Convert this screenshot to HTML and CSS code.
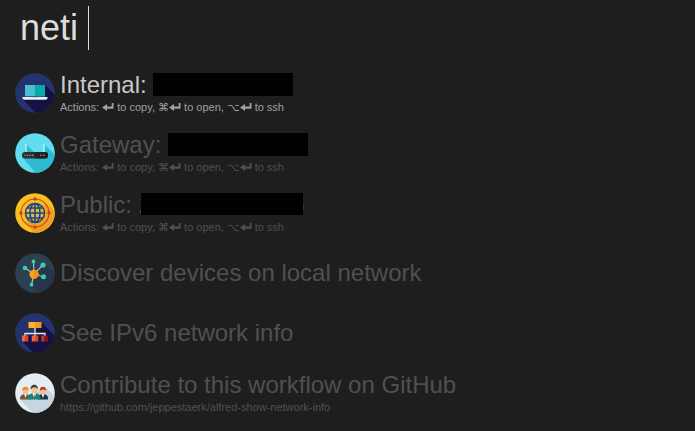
FILE: index.html
```html
<!DOCTYPE html>
<html lang="en">
<head>
<meta charset="utf-8">
<title>neti</title>
<link rel="stylesheet" href="styles.css">
</head>
<body>
<svg class="defs" aria-hidden="true">
  <symbol id="return" viewBox="0 0 12 9"><path d="M0 5.500 5 2v2.500h4.700V1h1.800v5.800H5V9z" fill="currentColor"/></symbol>
</svg>
<main class="launcher">
  <div class="search">
    <input class="query" type="text" value="neti " aria-label="Search" spellcheck="false"><span class="caret"></span>
  </div>
  <ul class="results">
    <li class="result selected">
      <svg class="icon" viewBox="0 0 40 40" aria-hidden="true">
        <clipPath id="disc"><circle cx="20" cy="20" r="19.8"/></clipPath>
        <g clip-path="url(#disc)">
          <path d="M0 0h40v40H0z" fill="#24336d"/>
          <path d="M30 12 44 26v18H24L8 26z" fill="#151243"/>
          <path d="M10 12h10v12H10z" fill="#4abfd1"/>
          <path d="M20 12h10v12H20z" fill="#08a8ad"/>
          <path d="M10 23.500h20" stroke="#196f82"/>
          <path d="M7.500 24h25v1.500l-1.500 1.300H9l-1.500-1.300z" fill="#e9eff3"/>
          <path d="M17 24h6v.8h-6z" fill="#b6c9d3"/>
        </g>
      </svg>
      <div class="text">
        <div class="title">Internal: <span class="redacted"></span></div>
        <div class="subtitle">Actions: <svg class="key"><use href="#return"/></svg> to copy, <span class="mod">⌘</span><svg class="key"><use href="#return"/></svg> to open, <span class="mod">⌥</span><svg class="key"><use href="#return"/></svg> to ssh</div>
      </div>
    </li>
    <li class="result">
      <svg class="icon" viewBox="0 0 40 40" aria-hidden="true">
        <g clip-path="url(#disc)">
          <path d="M0 0h40v40H0z" fill="#62dcef"/>
          <path d="M11 11 19 19h10v-8l15 15v18H24L8 25z" fill="#2dbbd2"/>
          <path d="M11 11v9M29 11v9" stroke="#b9edf5" stroke-width="1.6"/>
          <rect x="7" y="19" width="26" height="6.600" rx="3" fill="#293036"/>
          <path d="M20 19h10a3 3 0 0 1 3 3.300 3 3 0 0 1-3 3.300H20z" fill="#1f2328"/>
          <path d="M9.500 22.300h1.200m1.300 0h1.200m1.300 0h1.200m1.300 0h1.200" stroke="#a6a96b" stroke-width="1.200"/>
          <path d="M25 22.300h1.500m1.500 0h1.500" stroke="#c48235" stroke-width="1.200"/>
        </g>
      </svg>
      <div class="text">
        <div class="title">Gateway: <span class="redacted"></span></div>
        <div class="subtitle">Actions: <svg class="key"><use href="#return"/></svg> to copy, <span class="mod">⌘</span><svg class="key"><use href="#return"/></svg> to open, <span class="mod">⌥</span><svg class="key"><use href="#return"/></svg> to ssh</div>
      </div>
    </li>
    <li class="result">
      <svg class="icon" viewBox="0 0 40 40" aria-hidden="true">
        <g clip-path="url(#disc)">
          <path d="M0 0h40v40H0z" fill="#fbbf20"/>
          <path d="M31 10 44 23v21H24L10 30z" fill="#f0a01d"/>
          <circle cx="20" cy="20" r="14" fill="none" stroke="#c64a27" stroke-width="1.1"/>
          <circle cx="20" cy="20" r="11" fill="#f3ae38"/>
          <circle cx="20" cy="20" r="9.600" fill="#e9b250"/>
          <g fill="none" stroke="#174877" stroke-width="1.6">
            <circle cx="20" cy="20" r="9.500"/>
            <ellipse cx="20" cy="20" rx="5" ry="9.500"/>
            <path d="M20 10.500v19M10.500 20h19M12.500 15h15M12.500 25h15"/>
          </g>
          <g fill="#c64127"><circle cx="20" cy="6" r="1.700"/><circle cx="20" cy="34" r="1.700"/><circle cx="6" cy="20" r="1.700"/><circle cx="34" cy="20" r="1.700"/></g>
        </g>
      </svg>
      <div class="text">
        <div class="title">Public: <span class="address">2<span class="digit">6</span><span class="cover"></span></span></div>
        <div class="subtitle">Actions: <svg class="key"><use href="#return"/></svg> to copy, <span class="mod">⌘</span><svg class="key"><use href="#return"/></svg> to open, <span class="mod">⌥</span><svg class="key"><use href="#return"/></svg> to ssh</div>
      </div>
    </li>
    <li class="result">
      <svg class="icon" viewBox="0 0 40 40" aria-hidden="true">
        <g clip-path="url(#disc)">
          <path d="M0 0h40v40H0z" fill="#2c4053"/>
          <path d="m30 11 14 14v19H28L16 32l3-11z" fill="#263547"/>
          <path d="M19 21 18.500 8.500M19 21 10 15M19 21l9-9M19 21l10 3M19 21l-2.500 11" stroke="#a9b5bd" stroke-width="1.3"/>
          <g fill="#31d1ad"><circle cx="18.500" cy="8.500" r="1.900"/><circle cx="10" cy="15" r="2.300"/><circle cx="28" cy="12" r="2.600"/><circle cx="28.500" cy="23.700" r="2.500"/><circle cx="16.500" cy="31.700" r="1.900"/></g>
          <circle cx="19" cy="21.300" r="4.600" fill="#f7a128"/>
          <path d="M19 16.700a4.600 4.600 0 0 1 0 9.200z" fill="#ee9414"/>
        </g>
      </svg>
      <div class="text"><div class="title">Discover devices on local network</div></div>
    </li>
    <li class="result">
      <svg class="icon" viewBox="0 0 40 40" aria-hidden="true">
        <g clip-path="url(#disc)">
          <path d="M0 0h40v40H0z" fill="#24336d"/>
          <path d="m26 9 18 18v17H22L7 28l12-9z" fill="#151243"/>
          <path d="M20 14v9M10 23v-2.500h20V23" fill="none" stroke="#e3e6ec" stroke-width="1.3"/>
          <path d="M13.500 9H20v6h-6.500z" fill="#fcb52a"/><path d="M20 9h6.500v6H20z" fill="#ef991d"/>
          <path d="M7 22.500h3.300v6H7zM16.700 22.500H20v6h-3.300z" fill="#ef6840"/>
          <path d="M10.300 22.500h3v6h-3zM20 22.500h3.300v6H20z" fill="#d94732"/>
          <path d="M26.300 22.500h3.300v6h-3.300z" fill="#c53a20"/><path d="M29.600 22.500h3.300v6h-3.300z" fill="#8d1017"/>
        </g>
      </svg>
      <div class="text"><div class="title">See IPv6 network info</div></div>
    </li>
    <li class="result">
      <svg class="icon" viewBox="0 0 40 40" aria-hidden="true">
        <g clip-path="url(#disc)">
          <path d="M0 0h40v40H0z" fill="#e4edf3"/>
          <path d="m31 15 13 12v17H22L5 26.500z" fill="#c6d5df"/>
          <path d="M5 26.500c0-4 1-5 5.500-5.500 4 .5 5.500 1.500 5.500 5.500z" fill="#74513e"/>
          <path d="M23 26.500c0-4 1-5 5-5.500 4 .5 5 1.500 5 5.500z" fill="#1c3444"/>
          <path d="m9 21 1.500 4L12 21zm17.500 0 1.500 4 1.500-4z" fill="#f5f3ec"/>
          <ellipse cx="10.500" cy="18.300" rx="2.800" ry="3.300" fill="#f2bc91"/>
          <ellipse cx="28" cy="18.300" rx="2.800" ry="3.300" fill="#f2bc91"/>
          <path d="M7.300 18c-.8-5.600 7.200-5.600 6.400 0-1-2-4.400-2-6.400 0z" fill="#eb8920"/>
          <path d="M24.800 18c-.8-5.600 7.200-5.600 6.400 0-1-2-4.400-2-6.400 0z" fill="#c8321f"/>
          <path d="M13 26.500c0-4.500 1.500-6 6.300-6.500 4.700.5 6.200 2 6.200 6.500z" fill="#148578"/>
          <path d="m17.300 20 2 5.500 2-5.500z" fill="#f6f5ef"/><path d="m19.300 21-.7 4 .7 1.500.7-1.500z" fill="#b6382b"/>
          <ellipse cx="19.300" cy="16.500" rx="3.200" ry="4.200" fill="#f5c59a"/>
          <path d="M15.700 16.500c-1-6.500 8.200-6.500 7.200 0-1-3-5-3-7.200 0z" fill="#52382d"/>
        </g>
      </svg>
      <div class="text">
        <div class="title">Contribute to this workflow on GitHub</div>
        <div class="subtitle">https://github.com/jeppestaerk/alfred-show-network-info</div>
      </div>
    </li>
  </ul>
</main>
</body>
</html>
```

FILE: styles.css
```css
* { box-sizing: border-box; }

body {
  margin: 0;
  background: #1e1e1e;
  color: #505050;
  font-family: "Liberation Sans", Arial, sans-serif;
}

.defs { position: absolute; width: 0; height: 0; }

.launcher { min-height: 100vh; }

.search {
  display: flex;
  align-items: center;
  padding: 6px 20px 13px;
}

.query {
  field-sizing: content;
  padding: 0;
  border: 0;
  outline: 0;
  background: transparent;
  color: #dcdcdc;
  font: 36px/44px "Liberation Sans", Arial, sans-serif;
}

.caret { width: 1px; height: 44px; background: #dcdcdc; }

.results { margin: 0; padding: 0; list-style: none; }

.result {
  display: flex;
  align-items: center;
  gap: 5px;
  height: 60px;
  padding: 0 15px;
}

.selected { color: #c8c8c8; }

.selected .subtitle { color: #a0a0a2; }

.icon { flex: none; width: 40px; height: 40px; }

.text { min-width: 0; white-space: nowrap; }

.title { font-size: 24px; line-height: 28px; }

.subtitle { font-size: 11px; line-height: 16px; }

.redacted {
  display: inline-block;
  width: 140px;
  height: 23px;
  background: #000;
  vertical-align: -3px;
}

.address {
  position: relative;
  display: inline-flex;
  justify-content: space-between;
  width: 166px;
}

.cover {
  position: absolute;
  inset: 2px 2px 4px;
  background: #000;
}

.key { width: 12px; height: 9px; }

.mod { font-family: "DejaVu Sans", sans-serif; }
```
